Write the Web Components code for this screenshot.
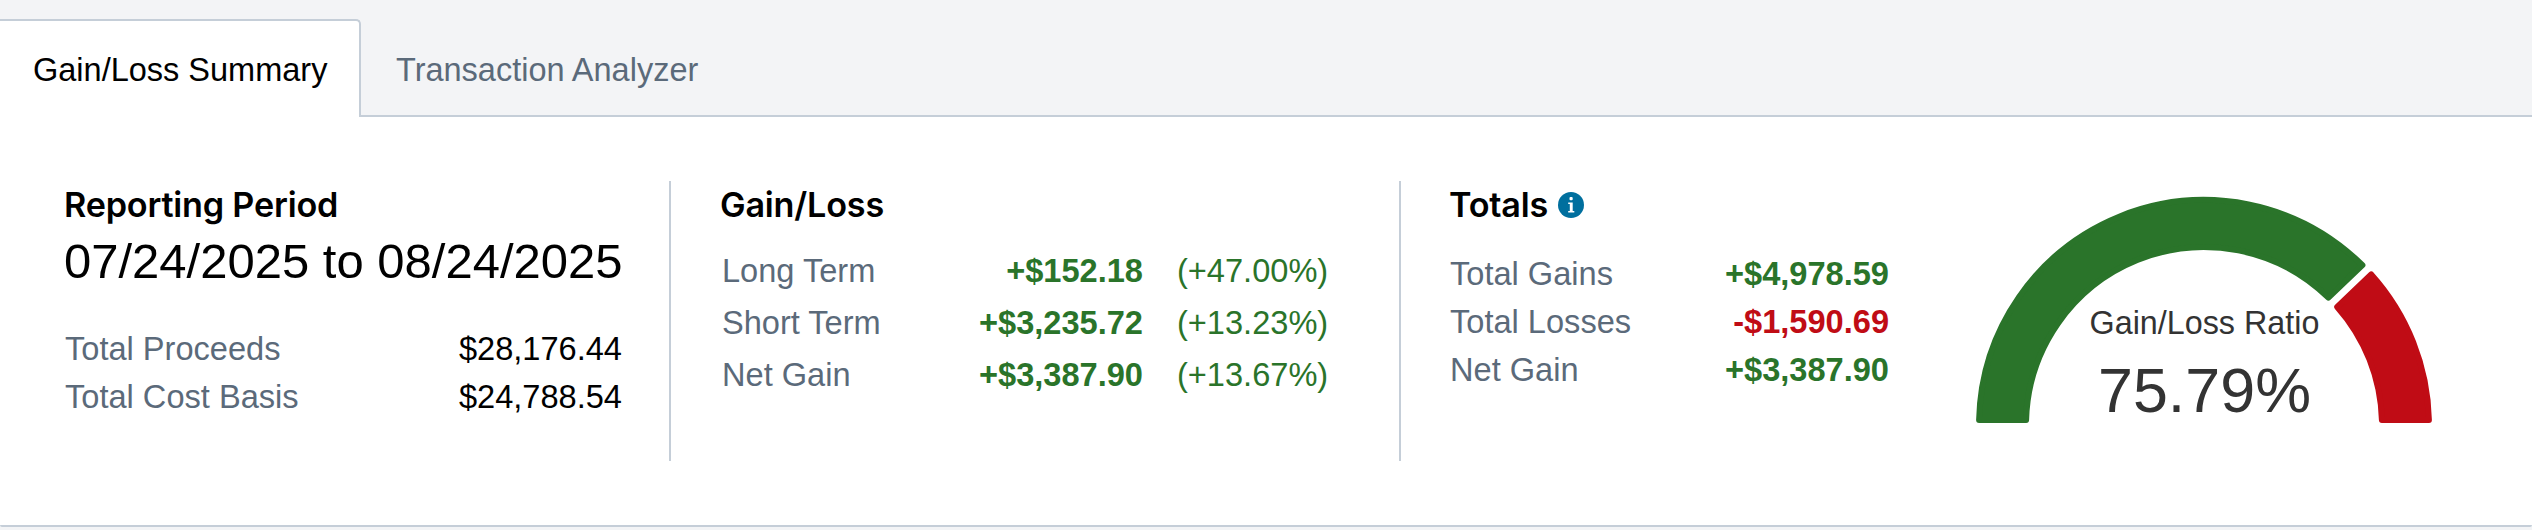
<!DOCTYPE html>
<html><head><meta charset="utf-8"><style>
html,body{margin:0;background:#f3f4f6;}
body{font-family:"Liberation Sans",Arial,sans-serif;width:2532px;height:530px;overflow:hidden;}
</style></head><body>
<gl-panel>
  <gl-tabs slot="tabs">
    <gl-tab active>Gain/Loss Summary</gl-tab>
    <gl-tab>Transaction Analyzer</gl-tab>
  </gl-tabs>
  <gl-period></gl-period>
  <gl-breakdown></gl-breakdown>
  <gl-totals></gl-totals>
  <gl-gauge></gl-gauge>
</gl-panel>
<script>
function def(name, html){
  customElements.define(name, class extends HTMLElement{
    constructor(){super();this.attachShadow({mode:'open'}).innerHTML=html;}
  });
}
const HEAD='font:560 34.2px/36px Inter,"Liberation Sans",sans-serif;color:#000;margin:0;letter-spacing:-.2px;';
def('gl-panel',`<style>
:host{display:block;height:527px;box-sizing:border-box;border-bottom:2px solid #c5ced8;background:#fff;border-radius:0 0 2px 2px;}
.main{display:flex;align-items:flex-start;box-sizing:border-box;padding:64px 0 0 65px;}
</style><slot name="tabs"></slot><div class="main"><slot></slot></div>`);
def('gl-tabs',`<style>
:host{display:flex;align-items:flex-end;height:117px;box-sizing:border-box;padding-top:19px;background:#f3f4f6;border-bottom:2px solid #c5ced8;}
</style><slot></slot>`);
def('gl-tab',`<style>
:host{display:block;height:98px;box-sizing:border-box;padding:31px 31px 0 35px;font-size:32.5px;line-height:40px;color:#5b6a7a;margin-bottom:-2px;white-space:nowrap;}
:host([active]){width:361px;padding-left:33px;color:#000;background:#fff;border:2px solid #c5ced8;border-width:2px 2px 0 0;border-radius:0 5px 0 0;padding-top:29px;}
</style><slot></slot>`);
def('gl-period',`<style>
:host{display:block;width:606px;height:280px;box-sizing:border-box;border-right:2px solid #c5ced8;flex:none;}
h2{${HEAD}margin:6px 0 0 -1px;}
.date{font-size:49px;line-height:56px;color:#000;margin-top:10px;width:556px;white-space:nowrap;margin-left:-1px;}
.r{display:flex;justify-content:space-between;width:556px;font-size:32.6px;line-height:48px;color:#5b6a7a;}
.r b{font-weight:400;color:#000;margin-right:-1px;}
.rows{margin-top:36px;}
</style><h2>Reporting Period</h2><div class="date">07/24/2025 to 08/24/2025</div>
<div class="rows"><div class="r"><span>Total Proceeds</span><b>$28,176.44</b></div><div class="r"><span>Total Cost Basis</span><b>$24,788.54</b></div></div>`);
def('gl-breakdown',`<style>
:host{display:block;width:730px;height:280px;box-sizing:border-box;border-right:2px solid #c5ced8;padding-left:50px;flex:none;}
h2{${HEAD}margin:6px 0 22px -1px;}
.r{display:grid;grid-template-columns:421px 34px 151px;font-size:32.6px;line-height:52px;color:#5b6a7a;white-space:nowrap;padding-left:1px;}
.r b{color:#2a742a;text-align:right;}
.r i{font-style:normal;color:#2a742a;grid-column:3;}
.a{display:flex;justify-content:space-between;}
</style><h2>Gain/Loss</h2>
<div class="r"><span class="a"><span>Long Term</span><b>+$152.18</b></span><i>(+47.00%)</i></div>
<div class="r"><span class="a"><span>Short Term</span><b>+$3,235.72</b></span><i>(+13.23%)</i></div>
<div class="r"><span class="a"><span>Net Gain</span><b>+$3,387.90</b></span><i>(+13.67%)</i></div>`);
def('gl-totals',`<style>
:host{display:block;width:487px;padding-left:49px;box-sizing:border-box;flex:none;}
h2{${HEAD}margin:6px 0 27px -1px;display:flex;align-items:center;gap:10px;}
svg{display:block;}
.r{display:flex;justify-content:space-between;width:439px;font-size:32.6px;line-height:48px;color:#5b6a7a;white-space:nowrap;}
.g{color:#2a742a}.l{color:#c00c15}
</style><h2>Totals <svg width="26" height="26" viewBox="0 0 26 26"><circle cx="13" cy="13" r="13" fill="#006f9e"/><rect x="11.5" y="5" width="3.2" height="3.2" rx="1" fill="#fff"/><path d="M10.2 10.4h4.5v8.6h1.6v1.6h-6.1V19h1.6v-7h-1.6z" fill="#fff"/></svg></h2>
<div class="r"><span>Total Gains</span><b class="g">+$4,978.59</b></div>
<div class="r"><span>Total Losses</span><b class="l">-$1,590.69</b></div>
<div class="r"><span>Net Gain</span><b class="g">+$3,387.90</b></div>`);
def('gl-gauge',`<style>
:host{display:block;flex:none;margin:12px 0 0 85.5px;width:460px;height:234px;}
svg{display:block;overflow:visible;}
text{font-family:"Liberation Sans",Arial,sans-serif;fill:#333;text-anchor:middle;}
</style><svg width="460" height="234" viewBox="0 0 460 234">
<path d="M5.1 227A225 225 0 0 1 388.4 72.2L354.4 104.7A178 178 0 0 0 52.1 227Z" fill="#2a742a" stroke="#2a742a" stroke-width="6" stroke-linejoin="round"/>
<path d="M397.2 81.4A225 225 0 0 1 454.9 227H407.9A178 178 0 0 0 363.2 113.9Z" fill="#c00c15" stroke="#c00c15" stroke-width="6" stroke-linejoin="round"/>
<text x="230.5" y="141" font-size="32.3">Gain/Loss Ratio</text>
<text x="230.5" y="219" font-size="62.8">75.79%</text>
</svg>`);
</script></body></html>
